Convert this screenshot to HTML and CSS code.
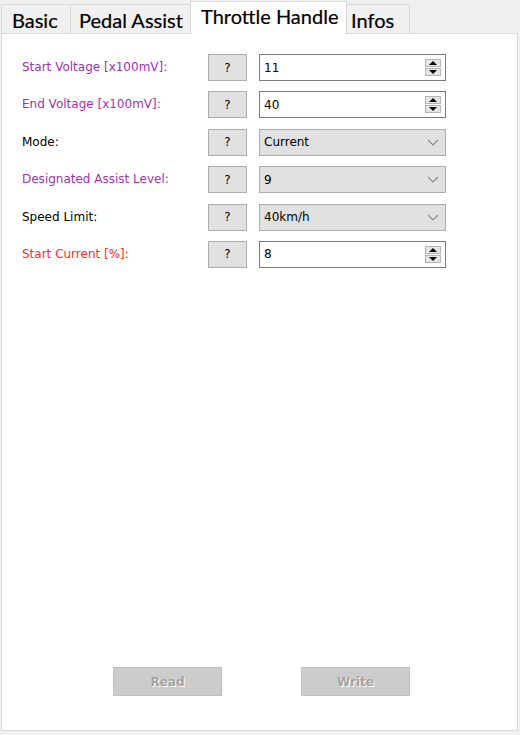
FILE: index.html
```html
<!DOCTYPE html>
<html>
<head>
<meta charset="utf-8">
<link rel="stylesheet" href="styles.css">
</head>
<body>
<div class="window">
  <div class="tabs">
    <div class="tab tab-basic">Basic</div>
    <div class="tab tab-pedal">Pedal Assist</div>
    <div class="tab tab-throttle active">Throttle Handle</div>
    <div class="tab tab-infos">Infos</div>
  </div>
  <div class="panel">
    <div class="form">
      <div class="row">
        <span class="label purple">Start Voltage [x100mV]:</span>
        <button class="help">?</button>
        <div class="spin"><span class="value">11</span><span class="arrows"><span class="arr up"></span><span class="arr down"></span></span></div>
      </div>
      <div class="row">
        <span class="label purple">End Voltage [x100mV]:</span>
        <button class="help">?</button>
        <div class="spin"><span class="value">40</span><span class="arrows"><span class="arr up"></span><span class="arr down"></span></span></div>
      </div>
      <div class="row">
        <span class="label">Mode:</span>
        <button class="help">?</button>
        <div class="combo"><span class="value">Current</span><svg class="chev" width="12" height="7" viewBox="0 0 12 7"><path d="M1 1 L6 6 L11 1" fill="none" stroke="#8a8a8a" stroke-width="1.1"/></svg></div>
      </div>
      <div class="row">
        <span class="label purple">Designated Assist Level:</span>
        <button class="help">?</button>
        <div class="combo"><span class="value">9</span><svg class="chev" width="12" height="7" viewBox="0 0 12 7"><path d="M1 1 L6 6 L11 1" fill="none" stroke="#8a8a8a" stroke-width="1.1"/></svg></div>
      </div>
      <div class="row">
        <span class="label">Speed Limit:</span>
        <button class="help">?</button>
        <div class="combo"><span class="value">40km/h</span><svg class="chev" width="12" height="7" viewBox="0 0 12 7"><path d="M1 1 L6 6 L11 1" fill="none" stroke="#8a8a8a" stroke-width="1.1"/></svg></div>
      </div>
      <div class="row">
        <span class="label red">Start Current [%]:</span>
        <button class="help">?</button>
        <div class="spin"><span class="value">8</span><span class="arrows"><span class="arr up"></span><span class="arr down"></span></span></div>
      </div>
    </div>
    <div class="actions">
      <button class="action" disabled>Read</button>
      <button class="action" disabled>Write</button>
    </div>
  </div>
</div>
</body>
</html>
```
FILE: styles.css
```css
* { box-sizing: border-box; }
html, body { margin: 0; padding: 0; }
body {
  background: #f0f0f0;
  width: 520px;
  height: 735px;
  overflow: hidden;
  font-family: "DejaVu Sans", Verdana, sans-serif;
}
.window {
  display: flex;
  flex-direction: column;
  height: 735px;
}
.tabs {
  display: flex;
  align-items: flex-end;
  height: 33px;
  padding-left: 1px;
}
.tab {
  height: 29px;
  border: 1px solid #d9d9d9;
  border-bottom: none;
  margin-left: -1px;
  background: #f0f0f0;
  font-family: Lato, "Noto Sans", sans-serif;
  font-size: 20px;
  line-height: 30px;
  color: #000;
  padding-left: 10px;
  white-space: nowrap;
  -webkit-text-stroke: 0.2px #000;
}
.tab:first-child { margin-left: 0; }
.tab-basic { width: 70px; }
.tab-pedal { width: 121px; padding-left: 8px; }
.tab-throttle { width: 157px; }
.tab-infos { width: 63px; margin-left: 0; border-left: none; padding-left: 4px; }
.tab.active {
  height: 33px;
  margin-bottom: -1px;
  background: #fff;
  line-height: 29px;
  position: relative;
  z-index: 1;
  border-color: #d9d9d9;
}
.panel {
  width: 517px;
  height: 698px;
  margin-left: 1px;
  background: #fff;
  border: 1px solid #d9d9d9;
  display: flex;
  flex-direction: column;
}
.form {
  display: grid;
  grid-template-columns: 174px 39px 187px;
  column-gap: 12px;
  row-gap: 10.4px;
  padding: 20px 0 0 20px;
}
.row {
  display: contents;
}
.label {
  font-size: 12px;
  line-height: 27px;
  color: #000;
  white-space: nowrap;
}
.label.purple { color: #a132b0; }
.label.red { color: #ff2b2b; }
.help {
  height: 27px;
  width: 39px;
  margin: 0;
  padding: 0;
  background: #e1e1e1;
  border: 1px solid #adadad;
  font-family: "DejaVu Sans", Verdana, sans-serif;
  font-size: 12px;
  color: #000;
}
.spin, .combo {
  height: 27px;
  display: flex;
  align-items: center;
  font-size: 12px;
  padding-left: 4px;
}
.spin {
  background: #fff;
  border: 1px solid #7a7a7a;
  padding-right: 4px;
}
.combo {
  background: #e1e1e1;
  border: 1px solid #adadad;
  padding-right: 6px;
}
.value { flex: 1; color: #000; }
.arrows {
  display: flex;
  flex-direction: column;
  gap: 1px;
}
.arr {
  width: 16px;
  height: 8px;
  background: #e5e5e5;
  border: 1px solid #b5b5b5;
  display: flex;
  align-items: center;
  justify-content: center;
}
.arr::after {
  content: "";
  width: 0;
  height: 0;
  border-left: 4px solid transparent;
  border-right: 4px solid transparent;
}
.arr.up::after { border-bottom: 4px solid #000; }
.arr.down::after { border-top: 4px solid #000; }
.chev { display: block; }
.actions {
  margin-top: auto;
  display: flex;
  justify-content: center;
  gap: 79px;
  padding: 0 0 34px 4px;
}
.action {
  width: 109px;
  height: 29px;
  margin: 0;
  background: #cccccc;
  border: 1px solid #bfbfbf;
  font-family: "DejaVu Sans", Verdana, sans-serif;
  font-weight: bold;
  font-size: 12px;
  color: #a3a3a3;
  text-shadow: 1px 1px 0 #ffffff;
}
```
